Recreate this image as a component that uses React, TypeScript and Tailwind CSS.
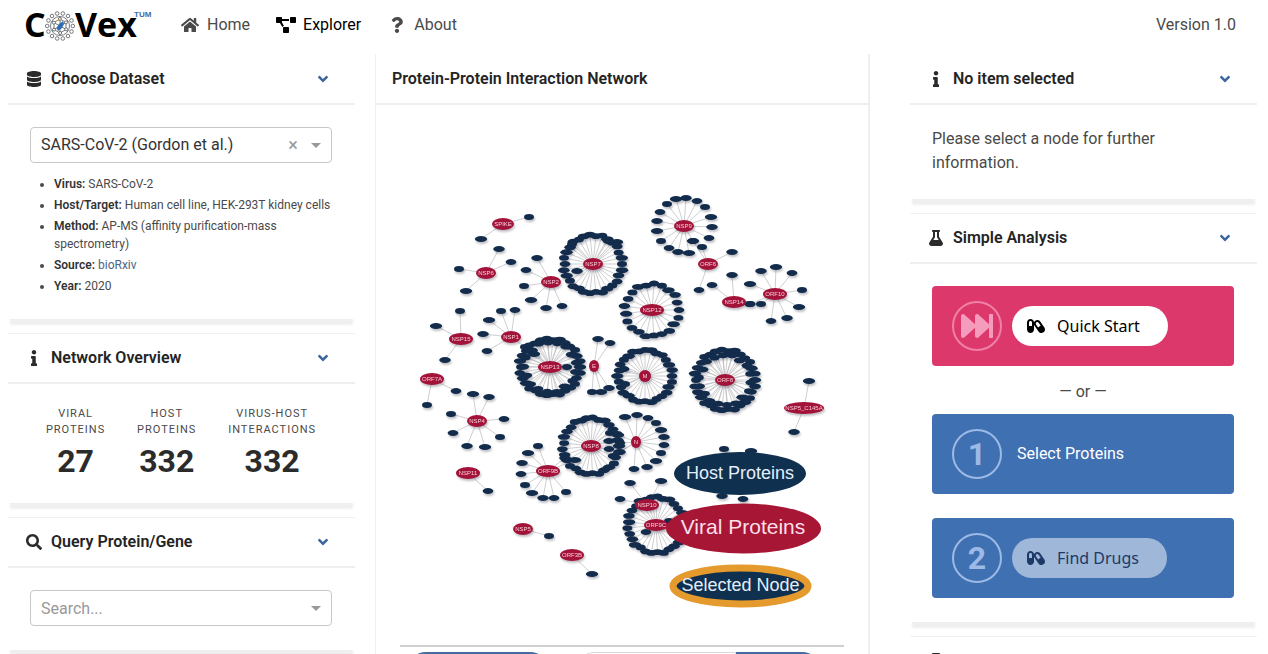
import React from "react";
import {
  FaAngleDown,
  FaCapsules,
  FaDatabase,
  FaFastForward,
  FaFlask,
  FaHome,
  FaInfo,
  FaProjectDiagram,
  FaQuestion,
  FaSearch,
} from "react-icons/fa";

type Point = [number, number];

interface Ring {
  rx: number;
  ry: number;
  count: number;
  start?: number;
}

interface Viral {
  name: string;
  at: Point;
  rx?: number;
  hosts?: Point[];
  rings?: Ring[];
}

const VIRAL: Viral[] = [
  { name: "SPIKE", at: [503, 224], hosts: [[529, 217], [481, 239]] },
  { name: "NSP6", at: [486, 273], rx: 10, hosts: [[499, 249], [511, 262], [459, 269], [466, 291]] },
  { name: "NSP2", at: [551, 282], rx: 10, hosts: [[537, 258], [526, 270], [524, 286], [531, 300], [546, 308], [562, 306]] },
  { name: "NSP7", at: [593, 264], rx: 10, hosts: [[577, 271], [608, 241], [572, 244], [617, 242]], rings: [{ rx: 29, ry: 29, count: 30 }] },
  {
    name: "NSP9",
    at: [684, 226],
    rx: 10,
    hosts: [
      [686, 198], [697, 201], [705, 207], [711, 217], [712, 227], [709, 238], [693, 241], [689, 253], [678, 252],
      [669, 248], [661, 241], [657, 231], [657, 221], [660, 212], [667, 204], [676, 199],
    ],
  },
  { name: "ORF6", at: [708, 264], rx: 10, hosts: [[732, 252], [699, 290], [702, 247], [693, 241]] },
  { name: "NSP14", at: [734, 302], rx: 12, hosts: [[732, 275], [712, 285], [750, 304]] },
  {
    name: "ORF10",
    at: [775, 294],
    rx: 12,
    hosts: [[776, 267], [761, 271], [792, 273], [802, 290], [799, 307], [787, 318], [771, 321], [761, 304], [750, 284], [750, 304]],
  },
  { name: "NSP12", at: [652, 310], rx: 12, rings: [{ rx: 27, ry: 26, count: 21 }] },
  { name: "NSP15", at: [461, 339], rx: 12, hosts: [[460, 311], [436, 326], [445, 360]] },
  { name: "NSP1", at: [511, 337], rx: 10, hosts: [[515, 310], [501, 311], [489, 320], [483, 334], [487, 351], [525, 347]] },
  {
    name: "NSP13",
    at: [550, 367],
    rx: 12,
    hosts: [[567, 367], [534, 354]],
    rings: [{ rx: 30, ry: 28, count: 30 }, { rx: 26, ry: 25, count: 17, start: 0.2 }],
  },
  { name: "E", at: [594, 366], rx: 5, hosts: [[598, 339], [610, 343], [592, 392], [601, 392], [609, 388]] },
  { name: "M", at: [645, 376], rx: 6, hosts: [[624, 369], [625, 384]], rings: [{ rx: 27, ry: 26, count: 28 }] },
  {
    name: "ORF8",
    at: [725, 380],
    rx: 10,
    rings: [{ rx: 30, ry: 30, count: 30 }, { rx: 26, ry: 25, count: 18, start: 0.1 }],
  },
  { name: "NSP5_C145A", at: [804, 408], rx: 20, hosts: [[809, 381], [794, 432]] },
  { name: "ORF7A", at: [432, 379], rx: 12, hosts: [[456, 391], [427, 405]] },
  {
    name: "NSP4",
    at: [477, 421],
    rx: 10,
    hosts: [[473, 394], [489, 397], [504, 419], [500, 437], [485, 447], [467, 446], [453, 433], [451, 414]],
  },
  {
    name: "NSP8",
    at: [591, 446],
    rx: 10,
    hosts: [[609, 441], [609, 449], [610, 433]],
    rings: [{ rx: 28, ry: 28, count: 29 }],
  },
  {
    name: "N",
    at: [636, 442],
    rx: 5,
    hosts: [
      [625, 417], [637, 415], [648, 418], [656, 423], [661, 430], [664, 437], [664, 445], [661, 453], [656, 461],
      [647, 467], [634, 469], [620, 443], [618, 435], [620, 452], [613, 456],
    ],
  },
  {
    name: "ORF9B",
    at: [548, 471],
    rx: 12,
    hosts: [[538, 446], [528, 453], [522, 463], [521, 474], [525, 485], [532, 493], [543, 498], [554, 498], [566, 492], [575, 460], [565, 458]],
  },
  { name: "NSP11", at: [468, 473], rx: 12, hosts: [[488, 491]] },
  { name: "NSP5", at: [523, 529], rx: 10, hosts: [[549, 536]] },
  { name: "ORF3B", at: [572, 555], rx: 12, hosts: [[592, 574]] },
  { name: "ORF9C", at: [656, 525], rx: 12, hosts: [[646, 532], [669, 521]], rings: [{ rx: 28, ry: 28, count: 29 }] },
  { name: "NSP10", at: [647, 505], rx: 12, hosts: [[661, 481], [630, 483], [620, 499]] },
];

const LOOSE_HOSTS: Point[] = [[724, 449], [751, 451], [722, 496], [743, 499]];

function ringPoints([cx, cy]: Point, ring: Ring): Point[] {
  return Array.from({ length: ring.count }, (_, i): Point => {
    const angle = (i / ring.count) * Math.PI * 2 + (ring.start ?? 0);
    const wobble = 1 + 0.035 * Math.sin(i * 2.4);
    return [cx + ring.rx * wobble * Math.cos(angle), cy + ring.ry * wobble * Math.sin(angle)];
  });
}

const NODES = VIRAL.map((v) => ({
  ...v,
  all: [...(v.rings ?? []).flatMap((r) => ringPoints(v.at, r)), ...(v.hosts ?? [])],
}));

function Network() {
  return (
    <svg viewBox="376 105 492 540" className="block h-auto w-full" role="img" aria-label="Protein interaction network">
      <g stroke="#b9b9bd" strokeWidth="0.7">
        {NODES.flatMap((v) =>
          v.all.map(([x, y], i) => <line key={v.name + i} x1={v.at[0]} y1={v.at[1]} x2={x} y2={y} />),
        )}
      </g>
      <g fill="#132c4c" className="drop-shadow-[1px_2px_1px_rgba(40,40,60,0.3)]">
        {[...NODES.flatMap((v) => v.all), ...LOOSE_HOSTS].map(([x, y], i) => (
          <ellipse key={i} cx={x} cy={y} rx={5 + ((i * 7) % 4) * 0.4} ry="2.9" />
        ))}
      </g>
      <g className="drop-shadow-[1px_2px_1px_rgba(40,40,60,0.3)]">
        {NODES.map((v) => (
          <g key={v.name}>
            <ellipse cx={v.at[0]} cy={v.at[1]} rx={v.rx ?? 11} ry="6" fill="#a31238" />
            <text
              x={v.at[0]}
              y={v.at[1] + 2}
              textAnchor="middle"
              fill="#f6cdd9"
              className="font-['Liberation_Sans',sans-serif] text-[6px]"
            >
              {v.name}
            </text>
          </g>
        ))}
      </g>
      <g textAnchor="middle" className="font-['Liberation_Sans',sans-serif] text-[18px]">
        <ellipse cx="740" cy="473.5" rx="66" ry="21.5" fill="#10304f" />
        <text x="740" y="479" fill="#e4eefa">Host Proteins</text>
        <ellipse cx="743.5" cy="528.5" rx="77.5" ry="25" fill="#a81636" />
        <text x="743" y="534" fill="#fbdfe8" className="text-[21px]">Viral Proteins</text>
        <ellipse cx="740.5" cy="586" rx="67.5" ry="18" fill="#10304f" stroke="#e59a2d" strokeWidth="7" />
        <text x="740.5" y="591" fill="#e4eefa">Selected Node</text>
      </g>
    </svg>
  );
}

function Logo() {
  const spikes = Array.from({ length: 14 }, (_, i) => (i / 14) * Math.PI * 2);
  return (
    <svg viewBox="0 0 128 50" className="h-[50px] w-32" role="img" aria-label="CoVex">
      <g className="font-['Open_Sans',sans-serif] text-[34px] font-bold">
        <text x="-1" y="37">C</text>
        <text x="50" y="37">Vex</text>
      </g>
      <text x="109" y="17" fill="#3f6ca6" className="font-['Liberation_Sans',sans-serif] text-[8px] font-bold">TUM</text>
      <g fill="none" stroke="#55585e" strokeWidth="0.8">
        <circle cx="35" cy="26" r="9.5" />
        {spikes.map((a) => (
          <circle key={a} cx={35 + 12.8 * Math.cos(a)} cy={26 + 12.8 * Math.sin(a)} r="1.8" />
        ))}
        <path d="M35 19l6 3.5v7L35 33l-6-3.5v-7z" />
        <path d="M35 16.500V35.500M27 21.500l16 9M43 21.500l-16 9" />
        {[0, 1, 2, 3, 4, 5].map((k) => (
          <circle
            key={k}
            cx={35 + 7 * Math.cos((k * Math.PI) / 3 + 0.5)}
            cy={26 + 7 * Math.sin((k * Math.PI) / 3 + 0.5)}
            r="1.5"
            fill="#fff"
          />
        ))}
      </g>
      <path d="M34 24l4-3 1 3-2 4-4 3-1.500-3z" fill="#2f6cb3" />
      <circle cx="34" cy="20" r="1" fill="#e59a2d" />
    </svg>
  );
}

function NavLink(props: { icon: React.ReactNode; label: string; active?: boolean }) {
  return (
    <a href="#" className={props.active ? "flex items-center gap-[5px] text-black" : "flex items-center gap-[5px]"}>
      <span className="flex w-6 justify-center">{props.icon}</span>
      {props.label}
    </a>
  );
}

function Card(props: { icon: React.ReactNode; title: string; first?: boolean; children?: React.ReactNode }) {
  return (
    <section className="shrink-0 bg-white shadow-[0_8px_2px_-2px_#efefef]">
      <header
        className={
          props.first
            ? "flex items-center border-t border-b-2 border-t-transparent border-b-[#efefef] px-4"
            : "flex items-center border-t border-b-2 border-t-[#f1f1f1] border-b-[#efefef] px-4"
        }
      >
        <span className="mr-[7px] flex w-5 justify-center text-[#2b2b2b]">{props.icon}</span>
        <h2 className="flex-1 text-base leading-[48px] font-semibold text-[#242424]">{props.title}</h2>
        <button type="button" aria-label={"Toggle " + props.title} className="flex w-8 justify-center text-[#3b659c]">
          <FaAngleDown size={16} />
        </button>
      </header>
      {props.children && <div className="pt-[22px] pr-[23px] pb-6 pl-[22px]">{props.children}</div>}
    </section>
  );
}

function Caret() {
  return (
    <svg viewBox="0 0 10 5" className="h-[5px] w-[10px] shrink-0" fill="#999" aria-hidden="true">
      <path d="M0 0h10L5 5z" />
    </svg>
  );
}

function Stat({ top, bottom, value }: { top: string; bottom: string; value: number }) {
  return (
    <div className="text-center">
      <p className="mb-[5px] text-[11px] leading-4 tracking-[1px] uppercase">
        {top}
        <br />
        {bottom}
      </p>
      <p className="text-[32px] leading-9 font-bold text-[#2b2b2b]">{value}</p>
    </div>
  );
}

function Step(props: { tone: "pink" | "blue"; mark: React.ReactNode; children: React.ReactNode }) {
  const pink = props.tone === "pink";
  return (
    <div
      className={
        pink
          ? "flex h-20 items-center gap-[10px] rounded bg-[#dc386b] px-5"
          : "flex h-20 items-center gap-[10px] rounded bg-[#3f70b2] px-5"
      }
    >
      <span
        className={
          pink
            ? "flex size-[50px] shrink-0 items-center justify-center rounded-full border-2 border-[#f080a8] text-[#f59cbd]"
            : "flex size-[50px] shrink-0 items-center justify-center rounded-full border-2 border-[#9dbae6] text-[32px] font-bold text-[#9dbae6]"
        }
      >
        {props.mark}
      </span>
      {props.children}
    </div>
  );
}

const FACTS: { label: string; value: React.ReactNode }[] = [
  { label: "Virus:", value: "SARS-CoV-2" },
  { label: "Host/Target:", value: "Human cell line, HEK-293T kidney cells" },
  { label: "Method:", value: "AP-MS (affinity purification-mass spectrometry)" },
  { label: "Source:", value: <a href="#" className="text-[#4d6484]">bioRxiv</a> },
  { label: "Year:", value: "2020" },
];

export default function App() {
  return (
    <div className="flex h-screen flex-col overflow-hidden bg-white font-[Roboto,sans-serif] text-base text-[#4a4a4a]">
      <header className="flex h-[50px] shrink-0 items-center pr-8 pl-[25px]">
        <a href="#" aria-label="Start page">
          <Logo />
        </a>
        <nav className="ml-[25px] flex gap-6">
          <NavLink icon={<FaHome size={18} />} label="Home" />
          <NavLink icon={<FaProjectDiagram size={20} />} label="Explorer" active />
          <NavLink icon={<FaQuestion size={16} />} label="About" />
        </nav>
        <span className="ml-auto">Version 1.0</span>
      </header>

      <main className="grid min-h-0 flex-1 grid-cols-[367fr_535fr_347fr] pt-1 pr-[11px] pl-2">
        <aside className="flex min-w-0 flex-col gap-[14px] pr-5">
          <Card first icon={<FaDatabase size={16} />} title="Choose Dataset">
            <div className="flex h-9 items-center rounded border border-[#c8c8c8] pr-[10px]">
              <select aria-label="Dataset" className="h-full min-w-0 flex-1 appearance-none bg-transparent pl-[10px] text-[#333] outline-none">
                <option>SARS-CoV-2 (Gordon et al.)</option>
              </select>
              <button type="button" aria-label="Clear dataset" className="mr-[10px] w-4 text-lg leading-none text-[#999]">
                ×
              </button>
              <Caret />
            </div>
            <ul className="mt-3 flex list-disc flex-col gap-[3px] pl-6 text-xs leading-[18px]">
              {FACTS.map((f) => (
                <li key={f.label}>
                  <strong className="font-semibold text-[#333]">{f.label}</strong> {f.value}
                </li>
              ))}
            </ul>
          </Card>
          <Card icon={<FaInfo size={16} />} title="Network Overview">
            <div className="flex justify-around">
              <Stat top="Viral" bottom="Proteins" value={27} />
              <Stat top="Host" bottom="Proteins" value={332} />
              <Stat top="Virus-Host" bottom="Interactions" value={332} />
            </div>
          </Card>
          <Card icon={<FaSearch size={16} />} title="Query Protein/Gene">
            <div className="flex h-9 items-center rounded border border-[#c8c8c8] pr-[10px]">
              <input
                type="text"
                aria-label="Search protein or gene"
                placeholder="Search..."
                className="h-full min-w-0 flex-1 bg-transparent pl-[10px] outline-none placeholder:text-[#999]"
              />
              <Caret />
            </div>
          </Card>
        </aside>

        <div className="min-h-0 min-w-0 pr-10">
          <section className="h-full overflow-hidden border-r-2 border-l border-[#efefef]">
            <h2 className="border-t border-b-2 border-t-transparent border-b-[#efefef] px-4 leading-[48px] font-semibold text-[#242424]">
              Protein-Protein Interaction Network
            </h2>
            <Network />
            <div className="mx-6 border-t-2 border-[#d0d0d0] pt-[5px]">
              <div className="flex items-start justify-between pr-6 pl-2">
                <button type="button" aria-label="Export network" className="h-9 w-[140px] rounded-full bg-[#426b9f]" />
                <div className="flex">
                  <input type="text" aria-label="Node filter" className="h-9 w-40 rounded-l-full border border-[#d8d8d8] px-4" />
                  <button type="button" aria-label="Apply filter" className="h-9 w-[84px] rounded-r-full bg-[#426b9f]" />
                </div>
              </div>
            </div>
          </section>
        </div>

        <aside className="flex min-w-0 flex-col gap-[14px]">
          <Card first icon={<FaInfo size={16} />} title="No item selected">
            <p className="leading-6">Please select a node for further information.</p>
          </Card>
          <Card icon={<FaFlask size={16} />} title="Simple Analysis">
            <Step tone="pink" mark={<FaFastForward size={32} />}>
              <button
                type="button"
                className="flex h-10 items-center gap-3 rounded-full bg-white pr-7 pl-[15px] font-['Noto_Sans',sans-serif] text-black"
              >
                <FaCapsules size={18} />
                Quick Start
              </button>
            </Step>
            <p className="pt-[14px] pb-[10px] text-center leading-6">— or —</p>
            <div className="flex flex-col gap-6">
              <Step tone="blue" mark="1">
                <span className="ml-[5px] text-white">Select Proteins</span>
              </Step>
              <Step tone="blue" mark="2">
                <button
                  type="button"
                  className="flex h-10 items-center gap-3 rounded-full bg-[#9fb7d9] pr-7 pl-[15px] font-['Noto_Sans',sans-serif] text-[#1d3a66]"
                >
                  <FaCapsules size={18} />
                  Find Drugs
                </button>
              </Step>
            </div>
          </Card>
          <Card icon={<FaFlask size={16} />} title="Advanced Analysis" />
        </aside>
      </main>
    </div>
  );
}
